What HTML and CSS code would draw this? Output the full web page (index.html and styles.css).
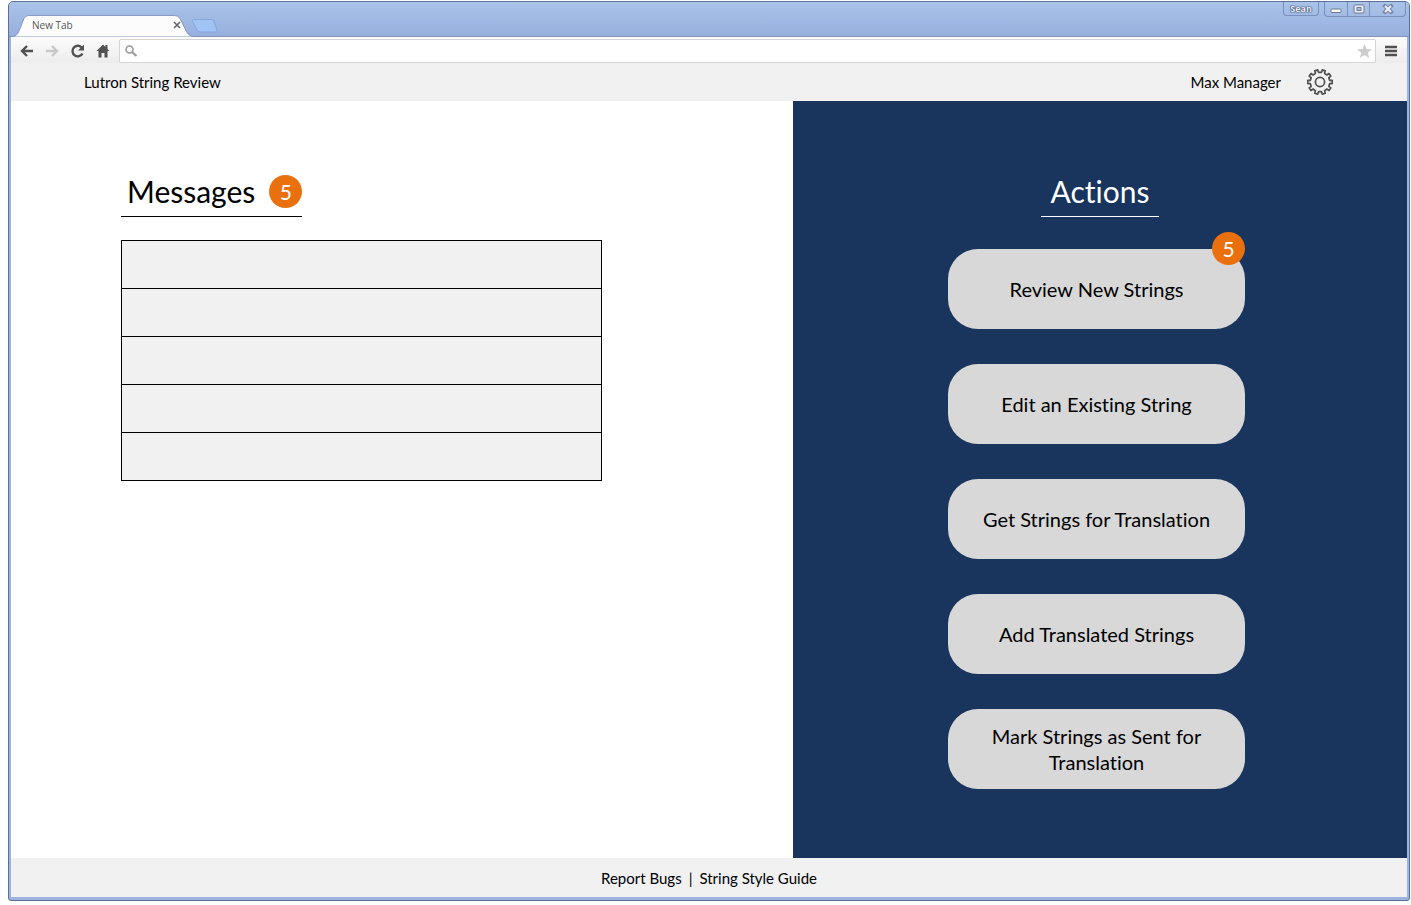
FILE: index.html
```html
<!DOCTYPE html>
<html lang="en">
<head>
<meta charset="utf-8">
<title>Lutron String Review</title>
<link rel="stylesheet" href="styles.css">
</head>
<body>
<div class="window">
  <div class="titlebar">
    <div class="tabs">
      <div class="tab">
        <svg class="tab-shape" viewBox="0 0 184 24" preserveAspectRatio="none" aria-hidden="true"><path d="M0 24C5 23 6 20 8 15L12 4Q13.500 .5 17 .5H164Q168 .5 170 4L175 15C177 20 179 23 184 24Z" fill="#fcfcfc" stroke="#8094be"/></svg>
        <span class="tab-title">New Tab</span>
        <button class="tab-close" aria-label="Close tab"><svg width="8" height="8" viewBox="0 0 8 8"><path d="M1 1l6 6M7 1L1 7" stroke="#666" stroke-width="1.600"/></svg></button>
      </div>
      <button class="new-tab" aria-label="New tab"><svg width="28" height="14" viewBox="0 0 28 14"><path d="M2.500.5H20Q22 .5 23 2.500L26 11Q26.500 13 24.500 13H9Q7 13 6 11L1.500 2.500Q1 .5 2.500.5Z" fill="#a0c4f5" stroke="#86a5dc"/></svg></button>
    </div>
    <div class="controls">
      <button class="user">Sean</button>
      <div class="group">
        <button aria-label="Minimize"><svg width="12" height="8" viewBox="0 0 12 8"><rect x="1" y="4" width="10" height="3.500" rx="1" fill="#fff" stroke="#6e7890"/></svg></button>
        <button aria-label="Maximize"><svg width="12" height="10" viewBox="0 0 12 10"><rect x="1" y="1" width="10" height="8" rx="1" fill="#e9eefa" stroke="#6e7890"/><rect x="4" y="3.500" width="4" height="3" fill="#a9bfe3" stroke="#6e7890"/></svg></button>
        <button class="close" aria-label="Close"><svg width="12" height="10" viewBox="0 0 12 10"><path d="M3 2l6 6M9 2L3 8" stroke="#7c879f" stroke-width="4" stroke-linecap="square"/><path d="M3 2l6 6M9 2L3 8" stroke="#e9eefa" stroke-width="2"/></svg></button>
      </div>
    </div>
  </div>
  <div class="toolbar">
    <button aria-label="Back"><svg width="16" height="16" viewBox="0 0 16 16"><path d="M14 8H3M8 3L3 8l5 5" fill="none" stroke="#505050" stroke-width="2.400"/></svg></button>
    <button aria-label="Forward"><svg width="16" height="16" viewBox="0 0 16 16"><path d="M2 8h11M8 3l5 5-5 5" fill="none" stroke="#c8c8c8" stroke-width="2.400"/></svg></button>
    <button aria-label="Reload"><svg width="16" height="16" viewBox="0 0 16 16"><path d="M13.500 10.500A5.300 5.300 0 1 1 12.500 4.300" fill="none" stroke="#505050" stroke-width="2.400"/><path d="M15 1.500V7.500H9Z" fill="#505050"/></svg></button>
    <button aria-label="Home"><svg width="16" height="16" viewBox="0 0 16 16"><path d="M9 1.500L2.500 8H4.500V14.500H7.500V10H10.500V14.500H13.500V8H15.500L13.500 6V2H11.500V4Z" fill="#505050"/></svg></button>
    <label class="address">
      <svg width="14" height="14" viewBox="0 0 14 14" aria-hidden="true"><circle cx="5.500" cy="5.500" r="3.500" fill="none" stroke="#999" stroke-width="1.600"/><path d="M8 8l4.500 4" stroke="#999" stroke-width="2.200"/></svg>
      <input type="text" aria-label="Address">
      <svg width="16" height="16" viewBox="0 0 16 16" aria-hidden="true"><path d="M8.500 1l2 5 5.500.3-4.300 3.500 1.500 5.200L8.500 12l-4.700 3 1.500-5.200L1 6.300 6.500 6Z" fill="#cdcdcd"/></svg>
    </label>
    <button class="menu" aria-label="Menu"><svg width="12" height="12" viewBox="0 0 12 12"><path d="M0 2h12M0 6h12M0 10h12" stroke="#505050" stroke-width="2.400"/></svg></button>
  </div>
  <header class="header">
    <span>Lutron String Review</span>
    <div class="account">
      <span>Max Manager</span>
      <button aria-label="Settings"><svg id="gear" width="28" height="28" viewBox="-14 -14 28 28"></svg></button>
    </div>
  </header>
  <main class="main">
    <section class="messages">
      <h1 class="heading">Messages <span class="badge">5</span></h1>
      <ul class="message-list"><li></li><li></li><li></li><li></li><li></li></ul>
    </section>
    <section class="actions">
      <h1 class="heading">Actions</h1>
      <div class="action-list">
        <button class="action">Review New Strings<span class="badge">5</span></button>
        <button class="action">Edit an Existing String</button>
        <button class="action">Get Strings for Translation</button>
        <button class="action">Add Translated Strings</button>
        <button class="action">Mark Strings as Sent for Translation</button>
      </div>
    </section>
  </main>
  <footer class="footer"><a href="#">Report Bugs</a><span>|</span><a href="#">String Style Guide</a></footer>
</div>
<script src="gear.js"></script>
</body>
</html>
```
FILE: gear.js
```js
// Builds the ten-tooth outline of the settings icon.
const teeth = 10;
const step = Math.PI * 2 / teeth;
const points = [];
for (let i = 0; i < teeth; i++) {
  [[-0.27, 9.8], [-0.2, 12.3], [0.2, 12.3], [0.27, 9.8]].forEach(([offset, radius]) => {
    const angle = (i + offset) * step - Math.PI / 2 + step / 2;
    points.push((Math.cos(angle) * radius).toFixed(2) + "," + (Math.sin(angle) * radius).toFixed(2));
  });
}
document.getElementById("gear").innerHTML =
  '<g fill="none" stroke="#505050" stroke-width="1.7" stroke-linejoin="round"><path d="M' + points.join("L") + 'Z"/><circle r="4.6"/></g>';
```
FILE: styles.css
```css
* { box-sizing: border-box; }
body { margin: 0; padding: 1px 1px 4px 8px; min-height: 100vh; display: flex; background: #fff; color: #000; font-family: Lato, Carlito, "Liberation Sans", sans-serif; font-size: 15px; font-variant-ligatures: none; }
button { margin: 0; padding: 0; border: 0; background: none; font: inherit; font-variant-ligatures: none; color: inherit; display: flex; align-items: center; justify-content: center; }
svg { display: block; }
.window { flex: 1; min-width: 0; display: flex; flex-direction: column; border: 1px solid #5e6f94; border-radius: 5px 5px 3px 3px; padding: 0 2px 3px; background: #9db3df; }
.titlebar { height: 35px; display: flex; justify-content: space-between; margin: 0 -2px; padding: 0 3px; background: linear-gradient(#a9c3e9, #97afdd); border-bottom: 1px solid #8094be; border-radius: 4px 4px 0 0; }
.tabs { display: flex; align-items: flex-end; }
.tab { position: relative; width: 182px; height: 22px; display: flex; align-items: center; justify-content: space-between; padding: 0 13px 2px 20px; margin-bottom: -1px; font: 10px "Open Sans", sans-serif; color: #555; }
.tab-shape { position: absolute; inset: 0; width: 100%; height: 100%; }
.tab-title, .tab-close { position: relative; }
.new-tab { margin: 0 0 3px -3px; }
.controls { display: flex; align-items: flex-start; gap: 5px; }
.controls button { height: 14px; width: 22px; }
.user, .group { border: 1px solid #7a8fba; border-top: 0; border-radius: 0 0 4px 4px; }
.controls .user { width: 36px; font: bold 9px "Open Sans", sans-serif; color: #e4ebf8; text-shadow: 0 0 1px #3f4a62, 0 0 1px #3f4a62, 0 0 2px #3f4a62; }
.group { display: flex; height: 15px; }
.group button + button { border-left: 1px solid #7a8fba; }
.controls .close { width: 36px; }
.controls .user, .group { border-top: 0; }
.toolbar { height: 26px; display: flex; align-items: center; gap: 9px; padding: 2px 10px 0 8px; background: linear-gradient(#fcfcfc, #ececec); }
.address { flex: 1; height: 24px; display: flex; align-items: center; padding: 0 3px 0 4px; background: #fff; border: 1px solid #d4d4d4; border-radius: 2px; }
.address input { flex: 1; min-width: 0; border: 0; outline: 0; background: none; }
.header { height: 38px; display: flex; align-items: center; justify-content: space-between; padding: 0 73px; background: #f1f1f1; }
.account { display: flex; align-items: center; gap: 25px; }
.main { flex: 1; display: grid; grid-template-columns: 782fr 614fr; }
.messages { padding: 72px 110px 0; background: #fff; }
.actions { display: flex; flex-direction: column; align-items: center; padding: 72px 0 68px; background: #19355d; color: #fff; }
.heading { width: fit-content; height: 44px; display: flex; align-items: center; gap: 14px; margin: 0; padding: 0 0 7px 6px; border-bottom: 1px solid currentColor; font-size: 30px; font-weight: 400; }
.actions .heading { padding: 0 10px 7px; }
.badge { width: 33px; height: 33px; display: flex; align-items: center; justify-content: center; border-radius: 50%; background: #ea700d; color: #fff; font-size: 21px; }
.message-list { list-style: none; margin: 23px 0 0; padding: 0; max-width: 481px; border: 1px solid #000; background: #f1f1f1; }
.message-list li { height: 48px; border-bottom: 1px solid #000; }
.message-list li:last-child { height: 47px; border: 0; }
.action-list { width: 297px; display: flex; flex-direction: column; gap: 35px; margin: 32px 7px 0 0; }
.action { position: relative; height: 80px; padding: 0 30px; border-radius: 30px; background: #d8d8d8; color: #000; font-size: 20px; line-height: 26px; text-align: center; }
.action .badge { position: absolute; top: -17px; right: 0; }
.footer { height: 39px; display: flex; align-items: center; justify-content: center; gap: 7px; background: #f1f1f1; }
.footer a { color: inherit; text-decoration: none; }
```
